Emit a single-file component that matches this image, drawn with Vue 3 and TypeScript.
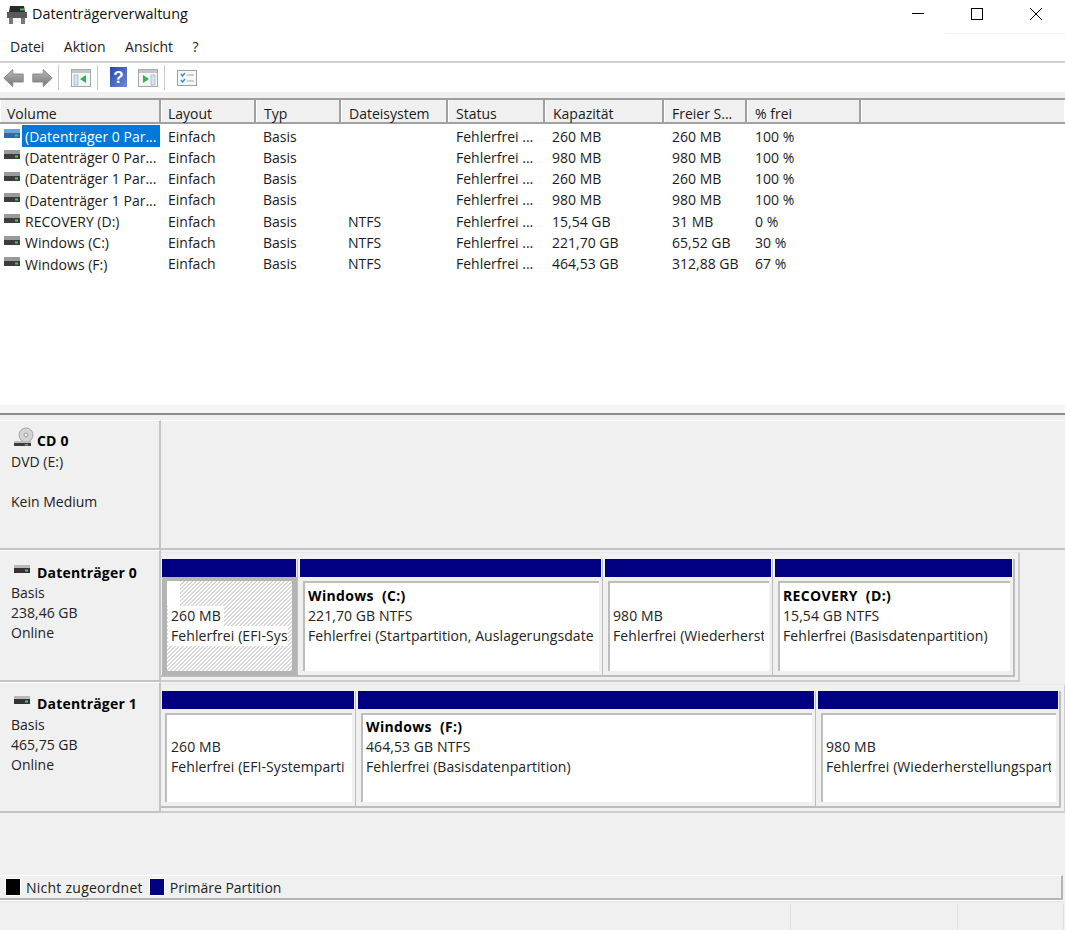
<script setup lang="ts">
interface Vol { name: string; fs: string; cap: string; free: string; pct: string; kind: string }
const columns = [
  { t: 'Volume', w: 161 }, { t: 'Layout', w: 95 }, { t: 'Typ', w: 85 }, { t: 'Dateisystem', w: 107 },
  { t: 'Status', w: 97 }, { t: 'Kapazität', w: 119 }, { t: 'Freier S...', w: 83 }, { t: '% frei', w: 114 },
]
const cellWidths = [160, 95, 85, 108, 96, 120, 83, 114]
const volumes: Vol[] = [
  { name: '(Datenträger 0 Par...', fs: '', cap: '260 MB', free: '260 MB', pct: '100 %', kind: 'sel' },
  { name: '(Datenträger 0 Par...', fs: '', cap: '980 MB', free: '980 MB', pct: '100 %', kind: '' },
  { name: '(Datenträger 1 Par...', fs: '', cap: '260 MB', free: '260 MB', pct: '100 %', kind: '' },
  { name: '(Datenträger 1 Par...', fs: '', cap: '980 MB', free: '980 MB', pct: '100 %', kind: '' },
  { name: 'RECOVERY (D:)', fs: 'NTFS', cap: '15,54 GB', free: '31 MB', pct: '0 %', kind: '' },
  { name: 'Windows (C:)', fs: 'NTFS', cap: '221,70 GB', free: '65,52 GB', pct: '30 %', kind: '' },
  { name: 'Windows (F:)', fs: 'NTFS', cap: '464,53 GB', free: '312,88 GB', pct: '67 %', kind: '' },
]
const disks = [
  {
    name: 'Datenträger 0', size: '238,46 GB', cls: 'd0', parts: [
      { w: 137, title: '', l1: '260 MB', l2: 'Fehlerfrei (EFI-Systempartition)', sel: true },
      { w: 305, title: 'Windows  (C:)', l1: '221,70 GB NTFS', l2: 'Fehlerfrei (Startpartition, Auslagerungsdatei, Absturzabbild)', sel: false },
      { w: 170, title: '', l1: '980 MB', l2: 'Fehlerfrei (Wiederherstellungspartition)', sel: false },
      { w: 242, title: 'RECOVERY  (D:)', l1: '15,54 GB NTFS', l2: 'Fehlerfrei (Basisdatenpartition)', sel: false },
    ],
  },
  {
    name: 'Datenträger 1', size: '465,75 GB', cls: 'd1', parts: [
      { w: 195, title: '', l1: '260 MB', l2: 'Fehlerfrei (EFI-Systempartition)', sel: false },
      { w: 460, title: 'Windows  (F:)', l1: '464,53 GB NTFS', l2: 'Fehlerfrei (Basisdatenpartition)', sel: false },
      { w: 245, title: '', l1: '980 MB', l2: 'Fehlerfrei (Wiederherstellungspartition)', sel: false },
    ],
  },
]
</script>

<template>
  <div class="app">
    <header class="titlebar">
      <svg class="appicon" width="20" height="20" viewBox="0 0 20 20">
        <path d="M3 1h14l1 6H2z" fill="#2a2a2a" />
        <rect x="0" y="7" width="20" height="6" fill="#5a5a5a" />
        <rect x="13" y="3.5" width="4" height="2" fill="#3fc04a" />
        <path d="M2 13h4v6H2zM14 13h4v6h-4z" fill="#777" />
        <rect x="6" y="13" width="8" height="5" fill="#f4f4f4" />
      </svg>
      <span class="title">Datenträgerverwaltung</span>
      <div class="winbtns">
        <svg width="14" height="14" viewBox="0 0 14 14"><path d="M1 6.5h12" stroke="#000" fill="none" /></svg>
        <svg width="14" height="14" viewBox="0 0 14 14"><rect x="1.5" y="1.5" width="11" height="11" stroke="#000" fill="none" /></svg>
        <svg width="14" height="14" viewBox="0 0 14 14"><path d="M1 1l12 12M13 1L1 13" stroke="#000" fill="none" /></svg>
      </div>
    </header>
    <nav class="menubar">
      <span>Datei</span><span>Aktion</span><span>Ansicht</span><span>?</span>
    </nav>
    <div class="toolbar">
      <svg class="tb" width="21" height="20" viewBox="0 0 21 20">
        <defs>
          <linearGradient id="arrowfill" x1="0" y1="0" x2="0" y2="1">
            <stop offset="0" stop-color="#b8b8b8" />
            <stop offset="1" stop-color="#777" />
          </linearGradient>
        </defs>
        <path d="M.8 10l9-8.5v4.5h10.4v8H9.8v4.5z" fill="url(#arrowfill)" stroke="#8a8a8a" />
      </svg>
      <svg class="tb next" width="21" height="20" viewBox="0 0 21 20"><path d="M20.2 10l-9-8.5v4.5H.8v8h10.4v4.5z" fill="url(#arrowfill)" stroke="#8a8a8a" /></svg>
      <i class="sep s1"></i>
      <svg class="tb" width="20" height="18" viewBox="0 0 20 18">
        <rect x=".5" y=".5" width="19" height="17" fill="#f4f6f6" stroke="#a4a9aa" />
        <rect x="1" y="1" width="18" height="3" fill="#c2c6c7" />
        <path d="M3 6h4v10H3z" fill="#d8e4ee" stroke="#8fa7ba" stroke-width=".6" />
        <path d="M15 6v8l-6-4z" fill="#2eb450" />
      </svg>
      <i class="sep s2"></i>
      <svg class="tb help" width="17" height="20" viewBox="0 0 17 20">
        <defs>
          <linearGradient id="helpfill" x1="0" y1="0" x2="1" y2="1">
            <stop offset="0" stop-color="#2a45a8" />
            <stop offset="1" stop-color="#6d8be0" />
          </linearGradient>
        </defs>
        <rect width="17" height="20" fill="url(#helpfill)" />
        <text x="8.5" y="15.5" text-anchor="middle" class="q">?</text>
      </svg>
      <svg class="tb vw" width="20" height="18" viewBox="0 0 20 18">
        <rect x=".5" y=".5" width="19" height="17" fill="#f4f6f6" stroke="#a4a9aa" />
        <rect x="1" y="1" width="18" height="3" fill="#c2c6c7" />
        <path d="M13 6h4v10h-4z" fill="#d8e4ee" stroke="#8fa7ba" stroke-width=".6" />
        <path d="M5 6v8l6-4z" fill="#2eb450" />
      </svg>
      <i class="sep s3"></i>
      <svg class="tb" width="20" height="16" viewBox="0 0 20 16">
        <rect x=".5" y=".5" width="19" height="15" fill="#f7f8f8" stroke="#9aa0a2" />
        <path d="M4 4l1.5 2L8 3M4 10l1.5 2L8 9" stroke="#3b8fdc" stroke-width="1.4" fill="none" />
        <path d="M10 5h7M10 11h7" stroke="#c0c4c6" stroke-width="1.4" />
      </svg>
    </div>
    <div class="strip"></div>

    <section class="list">
      <div class="thead">
        <div v-for="c in columns" :key="c.t" class="th" :style="{ width: c.w + 'px' }">{{ c.t }}</div>
        <div class="th fill"></div>
      </div>
      <div class="tbody">
        <div v-for="(v, i) in volumes" :key="i" class="tr">
          <div class="cell volcell" :style="{ width: cellWidths[0] + 'px' }">
            <svg width="18" height="12" viewBox="0 0 18 12" class="drive">
              <rect x="1" y="1" width="16" height="4" :fill="v.kind ? '#6aa5d8' : '#9a9a9a'" />
              <rect x="1" y="5" width="16" height="5" :fill="v.kind ? '#2b6ca8' : '#3c3c3c'" />
              <rect x="12" y="6.5" width="3" height="2" fill="#46c84f" />
            </svg>
            <span class="volname" :class="{ selected: v.kind === 'sel' }">{{ v.name }}</span>
          </div>
          <div class="cell" :style="{ width: cellWidths[1] + 'px' }">Einfach</div>
          <div class="cell" :style="{ width: cellWidths[2] + 'px' }">Basis</div>
          <div class="cell" :style="{ width: cellWidths[3] + 'px' }">{{ v.fs }}</div>
          <div class="cell" :style="{ width: cellWidths[4] + 'px' }">Fehlerfrei ...</div>
          <div class="cell" :style="{ width: cellWidths[5] + 'px' }">{{ v.cap }}</div>
          <div class="cell" :style="{ width: cellWidths[6] + 'px' }">{{ v.free }}</div>
          <div class="cell" :style="{ width: cellWidths[7] + 'px' }">{{ v.pct }}</div>
        </div>
      </div>
    </section>

    <div class="splitter"></div>

    <section class="graph">
      <div class="diskrow cd">
        <div class="label">
          <div class="lname">
            <svg width="20" height="20" viewBox="0 0 20 20" class="cdicon">
              <circle cx="12" cy="8" r="7" fill="#d4d4d4" stroke="#a5a5a5" />
              <circle cx="12" cy="8" r="2" fill="#f3f3f3" stroke="#9a9a9a" />
              <rect x="0" y="14" width="17" height="2" fill="#bdbdbd" />
              <rect x="0" y="16" width="17" height="3" fill="#3c3c3c" />
              <rect x="11" y="17" width="3" height="1.5" fill="#46c84f" />
            </svg>
            <b>CD 0</b>
          </div>
          <div>DVD (E:)</div>
          <div class="gap">Kein Medium</div>
        </div>
        <div class="area"></div>
      </div>

      <div v-for="d in disks" :key="d.name" class="diskrow" :class="d.cls">
        <div class="label">
          <div class="lname">
            <svg width="18" height="12" viewBox="0 0 18 12" class="drive2">
              <rect x="1" y="1" width="16" height="3" fill="#b9b9b9" />
              <rect x="1" y="4" width="16" height="5" fill="#333" />
              <rect x="12" y="5.5" width="3" height="2" fill="#46c84f" />
            </svg>
            <b>{{ d.name }}</b>
          </div>
          <div>Basis</div>
          <div>{{ d.size }}</div>
          <div>Online</div>
        </div>
        <div class="area">
          <div class="frame">
            <div v-for="(p, k) in d.parts" :key="k" class="part" :style="{ width: p.w + 'px' }">
              <div class="bar"></div>
              <div class="body" :class="{ sel: p.sel }">
                <div class="inner">
                  <div class="line bold"><span :class="{ blank: p.sel }">{{ p.title }}</span></div>
                  <div class="line"><span>{{ p.l1 }}</span></div>
                  <div class="line"><span>{{ p.l2 }}</span></div>
                </div>
              </div>
            </div>
          </div>
        </div>
      </div>
      <div class="spacer"></div>
      <footer class="legend">
        <i class="swatch black"></i><span class="wide">Nicht zugeordnet</span>
        <i class="swatch navy"></i><span>Primäre Partition</span>
      </footer>
    </section>

    <div class="status">
      <i></i><i></i><i></i>
    </div>
  </div>
</template>

<style>
html, body { margin: 0; background: #fff; }
</style>

<style scoped>
.app {
  width: 1065px; height: 930px; display: flex; flex-direction: column; overflow: hidden;
  font-family: "Open Sans", "Noto Sans", sans-serif; font-size: 14px; color: #1a1a1a; background: #fff;
}
.titlebar { height: 32px; display: flex; align-items: flex-start; flex: none; position: relative; }
.titlebar::after { content: ""; position: absolute; right: 0; top: 33px; width: 119px; height: 1px; background: #f0f0f0; }
.appicon { margin: 5px 5px 0 7px; }
.title { font-size: 14.4px; line-height: 22px; margin-top: 3px; color: #111; }
.winbtns { margin-left: auto; display: flex; gap: 45px; padding: 7px 22px 0 0; }
.menubar { height: 29px; flex: none; display: flex; align-items: center; gap: 19.5px; padding-left: 10px; border-bottom: 2px solid #cfcfcf; color: #222; }
.toolbar { height: 29px; flex: none; display: flex; align-items: center; padding-left: 3px; }
.tb { flex: none; }
.tb.next { margin-left: 8px; }
.sep { width: 1px; height: 25px; background: #c8c8c8; flex: none; }
.s1 { margin: 0 12px 0 5px; }
.s2 { margin: 0 12px 0 6px; }
.s3 { margin: 0 12px 0 6px; }
.help { margin-right: 11px; margin-top: -2px; }
.q { font: bold 17px "Liberation Sans", sans-serif; fill: #fff; }
.strip { height: 6px; flex: none; background: #f0f0f0; border-bottom: 2px solid #9e9e9e; }
.list { height: 305px; flex: none; background: #fff; overflow: hidden; }
.thead { display: flex; height: 22px; background: #f0f0f0; border-bottom: 2px solid #a0a0a0; box-sizing: content-box; }
.th { box-sizing: border-box; padding: 4px 0 0 7px; border-right: 2px solid #a0a0a0; border-left: 1px solid #fff; line-height: 20px; flex: none; }
.th:nth-child(1), .th:nth-child(2) { padding-left: 6px; }
.th.fill { flex: 1; border-right: 1px solid #fff; }
.tbody { padding-top: 1.5px; }
.tr { display: flex; height: 21.33px; line-height: 21px; }
.cell { box-sizing: border-box; padding-left: 8px; white-space: nowrap; overflow: hidden; flex: none; }
.volcell { padding-left: 3px; display: flex; align-items: center; gap: 1px; overflow: visible; }
.drive { flex: none; margin-top: -4px; }
.volname { padding: 0 0 0 3px; display: block; }
.volname.selected { background: #0078d7; color: #fff; width: 138px; box-sizing: border-box; align-self: flex-start; height: 22px; margin-top: -1px; padding-top: 1px; }
.splitter { height: 8px; flex: none; background: #f5f5f5; border-bottom: 2px solid #8c8c8c; box-sizing: content-box; }
.graph { flex: 1; display: flex; flex-direction: column; background: #f0f0f0; min-height: 0; margin-bottom: 1px; }
.diskrow { display: flex; height: 131.5px; flex: none; box-sizing: border-box; }
.diskrow.cd { height: 130px; margin-top: 5px; border-bottom: 2px solid #c4c4c4; }
.label { width: 161px; flex: none; box-sizing: border-box; padding: 7px 0 0 11px; border-top: 1px solid #fff; border-right: 2px solid #c4c4c4; border-bottom: 2px solid #c4c4c4; line-height: 20px; background: #f0f0f0; color: #222; }
.cd .label { padding-top: 6px; border-bottom: none; }
.cd .area { border-top: 1px solid #fff; }
.lname { display: flex; align-items: center; height: 20px; color: #000; margin-top: 5px; }
.cd .lname { height: 22px; margin-top: 3px; }
.d1 .lname { margin-top: 4.5px; margin-bottom: .5px; }
.lname b { font-weight: 700; letter-spacing: .2px; }
.cdicon { margin: -8px 3px 0 3px; }
.drive2 { margin: -6px 6px 0 2px; }
.gap { margin-top: 20px; }
.area { flex: 1; padding: 2px 0 0; min-width: 0; box-sizing: border-box; }
.frame { display: flex; width: fit-content; height: 100%; border-top: 1px solid #e8e8e8; border-right: 2px solid #cdcdcd; border-bottom: 2px solid #cdcdcd; box-sizing: border-box; padding: 6px 3px 0 0; }
.part { box-sizing: border-box; flex: none; padding: 0 1px 0 2px; height: 117.5px; border-right: 1px solid #bdbdbd; border-bottom: 2px solid #bdbdbd; }
.part:first-child { padding-left: 1px; }
.part:last-child { border-right: 2px solid #bdbdbd; }
.bar { height: 18px; background: #000080; }
.body { height: 97.5px; box-sizing: border-box; padding: 4px 2px 4px 3px; background: #f0f0f0; }
.inner { height: 100%; background: #fff; border-top: 2px solid #bdbdbd; border-left: 2px solid #bdbdbd; box-sizing: border-box; padding: 2px 5px 0 3px; overflow: hidden; }
.d1 .inner { padding-top: 1px; }
.d1 .part:first-child .inner { padding-left: 4px; padding-right: 7px; }
.line { height: 20px; line-height: 20px; white-space: pre; overflow: hidden; color: #222; letter-spacing: .08px; }
.line.bold { height: 21px; line-height: 21px; font-weight: 700; color: #000; letter-spacing: .35px; }
.body.sel { padding: 0; margin-right: -1px; border: 5px solid #b4b4b4; border-top-width: 4px; height: 99px; }
.body.sel .inner {
  border: none; padding: 0 4px 0 4px;
  background: linear-gradient(135deg, #d8d8d8 25%, #fff 25%, #fff 50%, #d8d8d8 50%, #d8d8d8 75%, #fff 75%) 0 0 / 4px 4px;
}
.body.sel .line { height: 20px; margin-left: -3px; padding-left: 3px; }
.body.sel .line.bold { height: 25px; margin-left: -4px; padding-left: 0; }
.body.sel .line span { background: #fff; display: inline-block; margin-left: -3px; padding: 0 3px; height: 22px; vertical-align: top; }
.body.sel .line .blank { width: 13px; height: 25px; box-sizing: border-box; margin-left: 0; padding: 0; }
.spacer { flex: 1; }
.legend { height: 25px; flex: none; display: flex; align-items: center; box-sizing: border-box; border-top: 1px solid #fff; border-right: 2px solid #b4b4b4; border-bottom: 2px solid #b4b4b4; margin-right: 2px; padding-left: 5px; color: #222; }
.wide { letter-spacing: .25px; }
.swatch { width: 14px; height: 16px; display: block; flex: none; margin-right: 5px; border: 1px solid #fff; box-sizing: content-box; }
.swatch.black { background: #000; }
.swatch.navy { background: #000080; margin-left: 6px; margin-right: 5px; }
.status { height: 29px; flex: none; background: #f0f0f0; border-top: 1px solid #e4e4e4; display: flex; justify-content: flex-end; padding-top: 2px; box-sizing: border-box; }
.status i { display: block; width: 1px; height: 26px; background: #e0e0e0; margin-right: 166px; }
.status i:nth-child(2) { margin-right: 105px; }
.status i:nth-child(3) { margin-right: 1px; }
</style>
